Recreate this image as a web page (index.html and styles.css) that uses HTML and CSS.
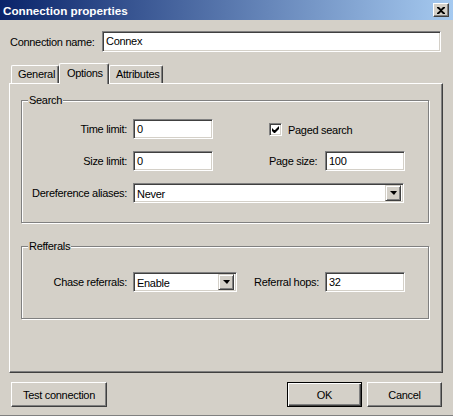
FILE: index.html
```html
<!DOCTYPE html>
<html lang="en">
<head>
    <meta charset="UTF-8">
    <title>Connection properties</title>
    <link rel="stylesheet" href="styles.css">
</head>
<body>
    <div class="dialog">
        <div class="titlebar">
            <span class="title">Connection properties</span>
            <span class="close-btn">
                <svg width="8" height="7" viewBox="0 0 8 7"><path d="M0 0h2l2 2 2-2h2v1l-3 2.5 3 2.5v1h-2l-2-2-2 2h-2v-1l3-2.5-3-2.5z" fill="#000"/></svg>
            </span>
        </div>

        <div class="name-row">
            <span class="name-label">Connection name:</span>
            <div class="edit name-edit">Connex</div>
        </div>

        <div class="tabs">
            <div class="tab">General</div>
            <div class="tab active">Options</div>
            <div class="tab">Attributes</div>
        </div>

        <div class="panel">
            <div class="group search-group">
                <span class="group-title">Search</span>
                <div class="search-grid">
                    <span class="field-label">Time limit:</span>
                    <div class="edit">0</div>
                    <span></span>
                    <label class="check-row">
                        <span class="checkbox">
                            <svg width="9" height="9" viewBox="0 0 9 9"><path d="M1 3v3l2 2h1l4-4v-3l-4 4h-1z" fill="#000"/></svg>
                        </span>
                        Paged search
                    </label>

                    <span class="field-label">Size limit:</span>
                    <div class="edit">0</div>
                    <span></span>
                    <span class="plain-label">Page size:</span>
                    <div class="edit">100</div>

                    <span class="field-label">Dereference aliases:</span>
                    <div class="combo wide-combo">
                        <span class="combo-text">Never</span>
                        <span class="combo-btn"><span class="arrow"></span></span>
                    </div>
                </div>
            </div>

            <div class="group referral-group">
                <span class="group-title">Refferals</span>
                <div class="referral-grid">
                    <span class="field-label">Chase referrals:</span>
                    <div class="combo">
                        <span class="combo-text">Enable</span>
                        <span class="combo-btn"><span class="arrow"></span></span>
                    </div>
                    <span class="field-label">Referral hops:</span>
                    <div class="edit">32</div>
                </div>
            </div>
        </div>

        <div class="buttons">
            <button type="button" class="btn test-btn">Test connection</button>
            <span class="spacer"></span>
            <button type="button" class="btn default">OK</button>
            <button type="button" class="btn">Cancel</button>
        </div>
    </div>
</body>
</html>
```

FILE: styles.css
```css
body {
    margin: 0;
    background-color: #d4d0c8;
    font-family: 'Liberation Sans', Arial, sans-serif;
    font-size: 11px;
    letter-spacing: -0.3px;
    color: #000;
}
.dialog {
    width: 453px;
    height: 416px;
    box-sizing: border-box;
    border-bottom: 1px solid #808080;
    background-color: #d4d0c8;
}
.titlebar {
    height: 20px;
    display: flex;
    align-items: center;
    padding-left: 3px;
    background: linear-gradient(to right, #0a246a, #a6caf0);
}
.title {
    flex: 1;
    color: #fff;
    font-weight: bold;
    font-size: 11.7px;
    letter-spacing: 0;
}
.close-btn {
    width: 16px;
    height: 14px;
    margin-right: 4px;
    box-sizing: border-box;
    display: flex;
    align-items: center;
    justify-content: center;
    background-color: #d4d0c8;
    border: 1px solid;
    border-color: #fff #404040 #404040 #fff;
    box-shadow: inset -1px -1px #808080;
}

/* sunken edit box */
.edit {
    height: 20px;
    box-sizing: border-box;
    background-color: #fff;
    border: 1px solid;
    border-color: #808080 #fff #fff #808080;
    box-shadow: inset 1px 1px #404040, inset -1px -1px #d4d0c8;
    padding-left: 3px;
    line-height: 18px;
    white-space: nowrap;
}
.name-row {
    display: flex;
    align-items: center;
    margin-top: 11px;
    padding-left: 10px;
}
.name-label {
    width: 92px;
}
.name-edit {
    width: 339px;
    height: 21px;
    line-height: 19px;
}

.tabs {
    display: flex;
    align-items: flex-end;
    height: 20px;
    margin-top: 11px;
    padding-left: 11px;
}
.tab {
    height: 18px;
    box-sizing: border-box;
    padding: 0 6px;
    line-height: 17px;
    border: 1px solid;
    border-bottom: none;
    border-color: #fff #404040 #fff #fff;
    box-shadow: inset -1px 0 #808080;
    border-radius: 2px 2px 0 0;
}
.tab:first-child {
    width: 48px;
}
.tab.active {
    position: relative;
    z-index: 1;
    width: 50px;
    height: 21px;
    margin-bottom: -1px;
    line-height: 18px;
    background-color: #d4d0c8;
    padding: 0 7px;
}
.tab:last-child {
    width: 54px;
}

.panel {
    width: 434px;
    height: 290px;
    box-sizing: border-box;
    margin-left: 9px;
    border: 1px solid;
    border-color: #fff #404040 #404040 #fff;
    box-shadow: inset -1px -1px #808080;
    padding-top: 16px;
}
.group {
    width: 408px;
    box-sizing: border-box;
    margin-left: 11px;
    border: 1px solid #808080;
    box-shadow: inset 1px 1px #fff, 1px 1px #fff;
}
.group-title {
    display: block;
    width: max-content;
    height: 13px;
    line-height: 13px;
    margin: -7px 0 0 6px;
    padding: 0 1px;
    background-color: #d4d0c8;
}
.search-group {
    height: 123px;
}
.referral-group {
    height: 73px;
    margin-top: 23px;
}
.search-grid {
    display: grid;
    grid-template-columns: 111px 80px 56px 56px 80px;
    grid-auto-rows: 20px;
    row-gap: 12px;
    margin-top: 12px;
}
.referral-grid {
    display: grid;
    grid-template-columns: 111px 104px 88px 80px;
    grid-auto-rows: 20px;
    margin-top: 19px;
}
.field-label {
    text-align: right;
    padding-right: 6px;
    line-height: 20px;
    white-space: nowrap;
}
.plain-label {
    line-height: 20px;
}
.check-row {
    grid-column: 4 / 6;
    display: flex;
    align-items: center;
    gap: 6px;
    padding-top: 1px;
}
.checkbox {
    width: 13px;
    height: 13px;
    box-sizing: border-box;
    display: flex;
    align-items: center;
    justify-content: center;
    background-color: #fff;
    border: 1px solid;
    border-color: #808080 #fff #fff #808080;
    box-shadow: inset 1px 1px #404040, inset -1px -1px #d4d0c8;
}

/* drop-down list */
.combo {
    height: 20px;
    box-sizing: border-box;
    display: flex;
    background-color: #fff;
    border: 1px solid;
    border-color: #808080 #fff #fff #808080;
    box-shadow: inset 1px 1px #404040, inset -1px -1px #d4d0c8;
    padding: 2px 2px 2px 3px;
}
.wide-combo {
    grid-column: 2 / 6;
    width: 271px;
}
.combo-text {
    flex: 1;
    line-height: 16px;
}
.combo-btn {
    width: 16px;
    height: 16px;
    box-sizing: border-box;
    display: flex;
    align-items: center;
    justify-content: center;
    background-color: #d4d0c8;
    border: 1px solid;
    border-color: #d4d0c8 #404040 #404040 #d4d0c8;
    box-shadow: inset 1px 1px #fff, inset -1px -1px #808080;
    margin-top: -1px;
}
.arrow {
    width: 0;
    height: 0;
    border-left: 4px solid transparent;
    border-right: 3px solid transparent;
    border-top: 4px solid #000;
}

.buttons {
    display: flex;
    gap: 5px;
    margin-top: 9px;
    padding: 0 11px;
}
.spacer {
    flex: 1;
}
.btn {
    width: 75px;
    height: 25px;
    box-sizing: border-box;
    padding: 0;
    font-family: inherit;
    font-size: 11px;
    letter-spacing: -0.3px;
    color: #000;
    background-color: #d4d0c8;
    border: 1px solid;
    border-color: #fff #404040 #404040 #fff;
    box-shadow: inset -1px -1px #808080;
    border-radius: 0;
}
.test-btn {
    width: 96px;
}
.btn.default {
    border-color: #000;
    box-shadow: inset 1px 1px #fff, inset -1px -1px #404040, inset -2px -2px #808080;
}
```
